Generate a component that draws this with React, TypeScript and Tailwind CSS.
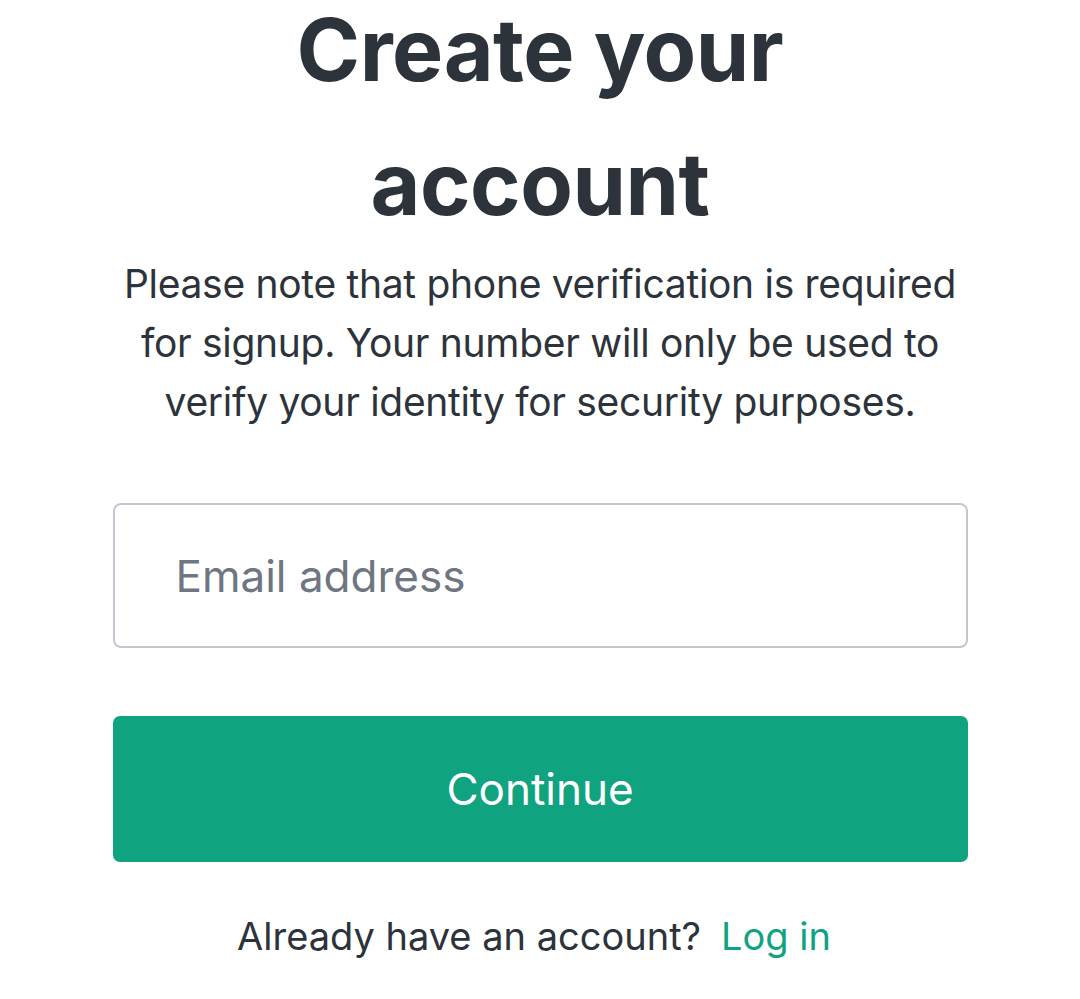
export default function App() {
  return (
    <div className="min-h-[999px] w-[1080px] bg-white font-['Inter',sans-serif] text-[#2d333a]">
      <div className="mx-auto flex w-[855px] flex-col items-center">
        <h1 className="text-center text-[86px] font-bold tracking-[-0.5px]">
          <span className="block leading-[100px]">Create your</span>
          <span className="mt-[17px] block leading-[135px]">account</span>
        </h1>
        <p className="mt-[2px] text-center text-[39px] leading-[59px] tracking-[-0.3px]">
          Please note that phone verification is required
          <br />
          for signup. Your number will only be used to
          <br />
          verify your identity for security purposes.
        </p>
        <div className="mt-[72px] flex h-[145px] w-full items-center rounded-[8px] border-2 border-[#c2c8d0] px-[61px]">
          <span className="text-[44px] text-[#6e7681]">Email address</span>
        </div>
        <button className="mt-[68px] flex h-[146px] w-full items-center justify-center rounded-[7px] bg-[#10a37f] text-[44px] text-white">
          Continue
        </button>
        <div className="mt-[44px] flex gap-[20px] pr-[12px] text-[38px] leading-[60px]">
          <span>Already have an account?</span>
          <span className="text-[#10a37f]">Log in</span>
        </div>
      </div>
    </div>
  );
}
